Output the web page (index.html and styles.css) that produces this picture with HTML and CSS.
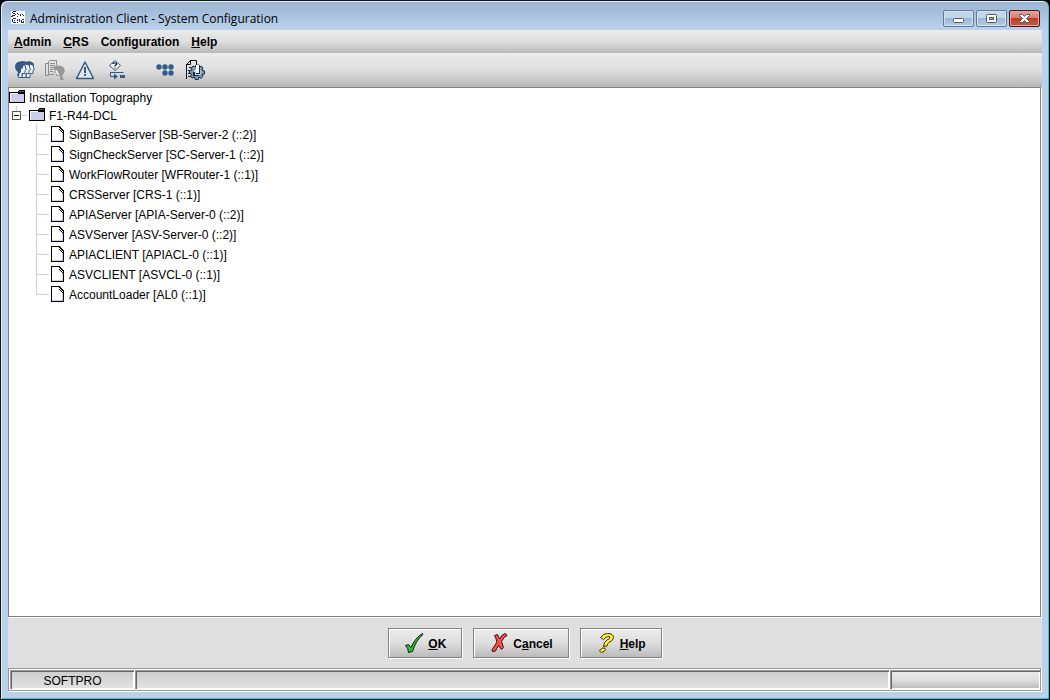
FILE: index.html
```html
<!DOCTYPE html>
<html lang="en">
<head>
<meta charset="utf-8">
<title>Administration Client - System Configuration</title>
<link rel="stylesheet" href="styles.css">
</head>
<body>
<svg class="defs" aria-hidden="true">
  <symbol id="folder" viewBox="0 0 16 14" shape-rendering="crispEdges">
    <path d="M0 2h9l1-2h6v13H0z" fill="#000"/>
    <path d="M1 4h14v8H1z" fill="#ccccec"/><path d="M1 3h8v1H1z" fill="#fff"/><path d="M1 4h1v8H1z" fill="#fff"/>
    <path d="M10 1h5v1h-5z" fill="#555"/><path d="M9 3h6v1H9z" fill="#000"/>
  </symbol>
  <symbol id="leaf" viewBox="0 0 14 16" shape-rendering="crispEdges">
    <path d="M1 1h7v1h1v1h1v1h1v1h1v1h1v9H1z" fill="#fff"/>
    <path d="M1 14h10V7h1v8H1z" fill="#ccccec"/>
    <path d="M0 0h9v1H1v14h11V6h1v10H0zM9 1h1v1H9zM10 2h1v1h-1zM11 3h1v1h-1zM12 4h1v3h-1zM8 1h1v1H8zM8 3h1v1H8zM9 2h1v1H9zM9 4h1v1H9zM10 3h1v1h-1zM10 5h1v1h-1zM11 4h1v1h-1zM11 6h1v1h-1z" fill="#000"/>
  </symbol>
</svg>
<div class="window">
  <header class="titlebar">
    <svg class="app-icon" width="14" height="13" viewBox="0 0 14 13" aria-hidden="true" shape-rendering="crispEdges">
      <path fill="#fff" d="M0 0h14v13H0z"/>
      <path fill="#26267c" d="M2 0h3v1H2zM1 1h1v1H1zM2 2h2v1H2zM4 3h1v1H4zM1 4h3v1H1zM6 2h1v1H6zM7 3h1v1H7zM6 5h1v1H6zM9 3h1v2H9zM11 3h1v1h-1zM12 4h1v1h-1zM0 5h2v1H0zM2 7h3v1H2zM1 8h1v3H1zM3 9h1v1H3zM2 11h3v1H2zM6 8h1v2H6zM6 11h1v1H6zM8 8h1v3H8zM10 9h1v3h-1zM11 8h2v1h-2zM12 10h1v1h-1zM11 11h2v1h-2z"/>
    </svg>
    <h1 class="title">Administration Client - System Configuration</h1>
    <div class="controls">
      <button class="control" aria-label="Minimize"><svg width="13" height="11" viewBox="0 0 13 11"><rect x="1.500" y="5.500" width="10" height="4" rx="1" fill="#fff" stroke="#535666"/></svg></button>
      <button class="control" aria-label="Maximize"><svg width="13" height="11" viewBox="0 0 13 11"><rect x="1.500" y="1.500" width="10" height="8" rx="1" fill="#fff" stroke="#535666"/><rect x="4.500" y="4.500" width="4" height="2" fill="#9ab8d8" stroke="#535666"/></svg></button>
      <button class="control close" aria-label="Close"><svg width="13" height="11" viewBox="0 0 13 11"><path d="M1.500 1.500h3l2 2 2-2h3v1l-3 3 3 3v1h-3l-2-2-2 2h-3v-1l3-3-3-3z" fill="#fff" stroke="#535666"/></svg></button>
    </div>
  </header>
  <main class="client">
    <nav class="menubar">
      <button class="menu"><u>A</u>dmin</button>
      <button class="menu"><u>C</u>RS</button>
      <button class="menu">Configuration</button>
      <button class="menu"><u>H</u>elp</button>
    </nav>
    <div class="toolbar">
      <button class="tool" aria-label="Users"><svg width="20" height="18" viewBox="0 0 20 18">
        <path d="M12 1.500q5-1.500 6.500 2v3l1 2-1.500 1v3h-3v4h-4z" fill="#eef1f4" stroke="#345b88"/>
        <path d="M8 1.500q5-1.500 6.500 2v3l1 2-1.500 1v3h-3v4H7z" fill="#eef1f4" stroke="#345b88"/>
        <path d="M4 9L8 4l2.500 1v2l1 1.500-1.500 1v3H7v4H3.500z" fill="#eef1f4" stroke="#345b88"/>
        <path d="M0 6q0-5 5-5.500 3-1 6 .5 5-2 8 2l-1 2q-3-2-4-.5L12 4q-2-1-4 1v2L6 8v3l-2 2v2H2l1-4Q0 9 0 6z" fill="#345b88"/>
      </svg></button>
      <button class="tool" aria-label="User report" disabled><svg width="20" height="20" viewBox="0 0 20 20">
        <path d="M3.500 15.500h-3V3.500h3M9 14.500H3.500v-13l1-1h7v5" fill="none" stroke="#8c8c8c"/>
        <path d="M5 3.500h5M5 5.500h5M5 7.500h3M5 9.500h3M5 11.500h3" stroke="#8c8c8c"/>
        <path d="M10.500 8.500l4-1v8h-3v-2l-2-1 1-2z" fill="#eee" stroke="#999"/>
        <path d="M8 7q5-3 10 0 3 3 1 6l-2 3 2 4h-4v-4l-1-2-1-2-1-2H9z" fill="#979797"/>
      </svg></button>
      <button class="tool" aria-label="Alerts"><svg width="20" height="19" viewBox="0 0 20 19">
        <path d="M10 1L18.500 17.500h-17z" fill="#dfe5eb" stroke="#345b88" stroke-width="1.500" stroke-linejoin="round"/>
        <path d="M9 6h2v6H9zM9 13h2v2H9z" fill="#345b88"/>
      </svg></button>
      <button class="tool flow" aria-label="Workflow"><svg width="18" height="20" viewBox="0 0 18 20">
        <path d="M7 .5l5.500 5-5.500 5-5.500-5z" fill="#f4f4f4" stroke="#345b88"/>
        <path d="M5 4V3h3.500v2H7v1.500M6.500 8h1" fill="none" stroke="#000"/>
        <path d="M15.500 12.500h-13v4h5" fill="none" stroke="#345b88"/><path d="M6 13.500l4 3-4 3zM12 15h5v3h-5z" fill="#345b88"/>
      </svg></button>
      <button class="tool nodes" aria-label="Nodes"><svg width="18" height="12" viewBox="0 0 18 12" fill="#345b88">
        <circle cx="3" cy="3" r="2.700"/><circle cx="9" cy="3" r="2.700"/><circle cx="15" cy="3" r="2.700"/><circle cx="9" cy="9" r="2.700"/><circle cx="15" cy="9" r="2.700"/>
      </svg></button>
      <button class="tool" aria-label="System configuration"><svg width="20" height="20" viewBox="0 0 20 20">
        <path d="M1.500 19V4.500l4-4h6v5M5.500 0v4.500H1" fill="none" stroke="#111"/>
        <path d="M4 7.500h3M3 10.500h2M3 13.500h2M3 16.500h3" stroke="#222"/>
        <path d="M11 5h3l.5 2 2-.8 1.500 2-1 1.800 2.500 1v3l-2.300.5.6 2.200-2 1.600-1.800-1.300-.8 2.500h-3l-.7-2.300-2.500.9-1.500-2 1-2L4.500 13v-2.500L7 10 6 8l2-2 2.300 1z" fill="#7795b5" stroke="#182b45"/>
        <circle cx="12.500" cy="12" r="3.500" fill="#c3d6e6"/>
        <path d="M11 5h3v8h-3z" fill="#fff"/><path d="M14 5h1v9h-4v-1h3zM8 12h2v3h4v1H8z" fill="#182b45"/>
      </svg></button>
    </div>
    <section class="pane">
      <ul class="tree" role="tree" aria-label="Installation Topography">
        <li><div class="row root"><svg class="folder"><use href="#folder"/></svg><span class="label">Installation Topography</span></div>
          <ul>
            <li><div class="row branch"><button class="toggle" aria-label="Collapse F1-R44-DCL"><svg width="9" height="9" viewBox="0 0 9 9" shape-rendering="crispEdges"><path d="M0 0h9v9H0z" fill="#555"/><path d="M1 1h7v7H1z" fill="#fff"/><path d="M2 4h5v1H2z"/></svg></button><span class="dash"></span><svg class="folder"><use href="#folder"/></svg><span class="label">F1-R44-DCL</span></div>
              <ul class="leaves">
                <li class="leaf"><span class="guide"></span><svg class="doc"><use href="#leaf"/></svg><span class="label">SignBaseServer [SB-Server-2 (::2)]</span></li>
                <li class="leaf"><span class="guide"></span><svg class="doc"><use href="#leaf"/></svg><span class="label">SignCheckServer [SC-Server-1 (::2)]</span></li>
                <li class="leaf"><span class="guide"></span><svg class="doc"><use href="#leaf"/></svg><span class="label">WorkFlowRouter [WFRouter-1 (::1)]</span></li>
                <li class="leaf"><span class="guide"></span><svg class="doc"><use href="#leaf"/></svg><span class="label">CRSServer [CRS-1 (::1)]</span></li>
                <li class="leaf"><span class="guide"></span><svg class="doc"><use href="#leaf"/></svg><span class="label">APIAServer [APIA-Server-0 (::2)]</span></li>
                <li class="leaf"><span class="guide"></span><svg class="doc"><use href="#leaf"/></svg><span class="label">ASVServer [ASV-Server-0 (::2)]</span></li>
                <li class="leaf"><span class="guide"></span><svg class="doc"><use href="#leaf"/></svg><span class="label">APIACLIENT [APIACL-0 (::1)]</span></li>
                <li class="leaf"><span class="guide"></span><svg class="doc"><use href="#leaf"/></svg><span class="label">ASVCLIENT [ASVCL-0 (::1)]</span></li>
                <li class="leaf"><span class="guide"></span><svg class="doc"><use href="#leaf"/></svg><span class="label">AccountLoader [AL0 (::1)]</span></li>
              </ul>
            </li>
          </ul>
        </li>
      </ul>
    </section>
    <div class="actions">
      <button class="action"><svg width="20" height="20" viewBox="0 0 20 20"><path d="M1.500 12.500l3-1 2.500 3Q11 5 18.500.5l.5 1Q12 7 8.500 18.500l-4 1q0-4-3-7z" fill="#2dbd3a" stroke="#0c240e"/></svg><span class="label"><u>O</u>K</span></button>
      <button class="action"><svg width="20" height="20" viewBox="-2 0 20 20"><path d="M3.500 2.500l3-1 2 4.500Q11 1 14.500.5l1.500 2q-3 1-5.500 6l2 6-2 2-3-4q-2 3-3 5.500l-3 .5-.5-1.500L6 9q-1-4-2.500-6.500z" fill="#ff5050" stroke="#3a0c0c"/></svg><span class="label">C<u>a</u>ncel</span></button>
      <button class="action"><svg width="20" height="20" viewBox="-3 0 20 20"><path d="M1.500 4.500Q4 .5 8.500.5q6 0 6 4 0 3-4.500 5-2 1-2 3.500l-3.500.5Q4.500 9 8 7q3-1 3-3-2-2-6.500 2.500z" fill="#fff42c" stroke="#34320a"/><path d="M1.500 16.500q2-2 4-1.500l1 1.500-1.500 2q-3 2-4.500-.5z" fill="#fff42c" stroke="#34320a"/></svg><span class="label"><u>H</u>elp</span></button>
    </div>
    <footer class="statusbar">
      <div class="cell name">SOFTPRO</div>
      <div class="cell message"></div>
      <div class="cell progress"></div>
    </footer>
  </main>
</div>
</body>
</html>
```
FILE: styles.css
```css
* { box-sizing: border-box; }
body {
  margin: 0;
  height: 100vh;
  background: #000;
  font: 12px/18px "Liberation Sans", Arial, sans-serif;
  color: #000;
}
ul { list-style: none; margin: 0; padding: 0; }
button { font: inherit; color: inherit; padding: 0; border: 0; background: none; }
svg { display: block; flex: none; }
.defs { position: absolute; width: 0; height: 0; }

.window {
  height: 100%;
  display: flex;
  flex-direction: column;
  padding: 0 7px 7px;
  border: 1px solid #111418;
  border-right-color: #000;
  border-radius: 7px 7px 0 0;
  background: linear-gradient(#99b4d1, #b9d1ea 28px, #b9d1ea);
  box-shadow: inset 1px 1px #e8f1fa, inset -1px -1px #20cbe0;
}

.titlebar { display: flex; align-items: flex-start; height: 29px; flex: none; }
.app-icon { margin: 10px 5px 0 3px; }
.title { margin: 9px 0 0; font: 12px/18px "Open Sans", "Noto Sans", sans-serif; }
.controls { display: flex; gap: 2px; margin: 9px 2px 0 auto; }
.control {
  display: grid;
  place-items: center;
  width: 31px;
  height: 17px;
  border: 1px solid #64799a;
  border-radius: 2px;
  background: linear-gradient(#c3d5e8 0 45%, #9bb8d8 50%, #b5cde6);
  box-shadow: inset 0 0 0 1px #d3e2f1;
}
.close {
  border-color: #4d1320;
  background: linear-gradient(#e4a39b 0, #d4816f 45%, #bf3d25 50%, #cb5944);
  box-shadow: inset 0 0 0 1px #e6a69c;
}

.client { flex: 1; min-height: 0; display: flex; flex-direction: column; background: #dfdfdf; }
.menubar, .toolbar {
  display: flex;
  flex: none;
  align-items: center;
  background: linear-gradient(#ececec, #dedede 50%, #b8b8b8);
}
.menubar { height: 23px; gap: 12px; padding: 0 6px; font-weight: bold; }
.toolbar { height: 34px; padding: 0 7px; gap: 10px; }
.tool { display: grid; place-items: center; min-width: 20px; }
.flow { min-width: 24px; }
.nodes { margin-left: 16px; }

.pane {
  flex: 1;
  min-height: 0;
  overflow: hidden;
  background: #fff;
  border: 1px solid #808080;
  margin-right: 1px;
  box-shadow: 1px 1px #fff;
}
.row, .leaf { display: flex; align-items: center; white-space: nowrap; }
.label { padding-top: 2px; line-height: 16px; }
.row { height: 18px; gap: 4px; }
.branch { padding-left: 3px; gap: 0; background: linear-gradient(#ccccec, #ccccec) 7px 0 / 1px 5px no-repeat; }
.dash { width: 7px; height: 1px; margin-right: 1px; background: #ccccec; }
.branch .folder { margin-right: 4px; }
.folder { width: 16px; height: 14px; }
.leaves { padding-left: 27px; }
.leaf { height: 20px; }
.guide {
  align-self: stretch;
  width: 13px;
  margin-right: 2px;
  background: linear-gradient(#ccccec, #ccccec) 0 0 / 1px 100% no-repeat, linear-gradient(#ccccec, #ccccec) 0 10px / 13px 1px no-repeat;
}
.leaf:last-child .guide { background-size: 1px 10px, 13px 1px; }
.doc { width: 14px; height: 16px; margin-right: 4px; }

.actions { display: flex; flex: none; justify-content: center; gap: 11px; padding: 11px 0 10px; }
.action {
  display: flex;
  align-items: center;
  gap: 4px;
  height: 30px;
  padding: 0 15px;
  border: 1px solid #858585;
  background: linear-gradient(#ececec, #dedede 50%, #bababa);
  box-shadow: inset 1px 1px #fff, 1px 1px #fff;
  font-weight: bold;
}

.statusbar {
  display: flex;
  flex: none;
  gap: 1px;
  height: 23px;
  margin-right: 1px;
  margin-bottom: 1px;
  padding: 1px 0 1px 1px;
  border: 1px solid #999;
  background: #fff;
  box-shadow: 1px 1px #fff;
}
.cell {
  border: 1px solid #999;
  border-width: 1px 0 0 1px;
  box-shadow: inset 1px 1px #666, inset -1px -1px #fff;
  background: linear-gradient(#ececec, #dedede 50%, #bababa);
  text-align: center;
}
.name { width: 124px; line-height: 20px; background: linear-gradient(#cecece, #e2e2e2); }
.message { flex: 1; background: linear-gradient(#cecece, #e2e2e2); }
.progress { width: 150px; }
```
